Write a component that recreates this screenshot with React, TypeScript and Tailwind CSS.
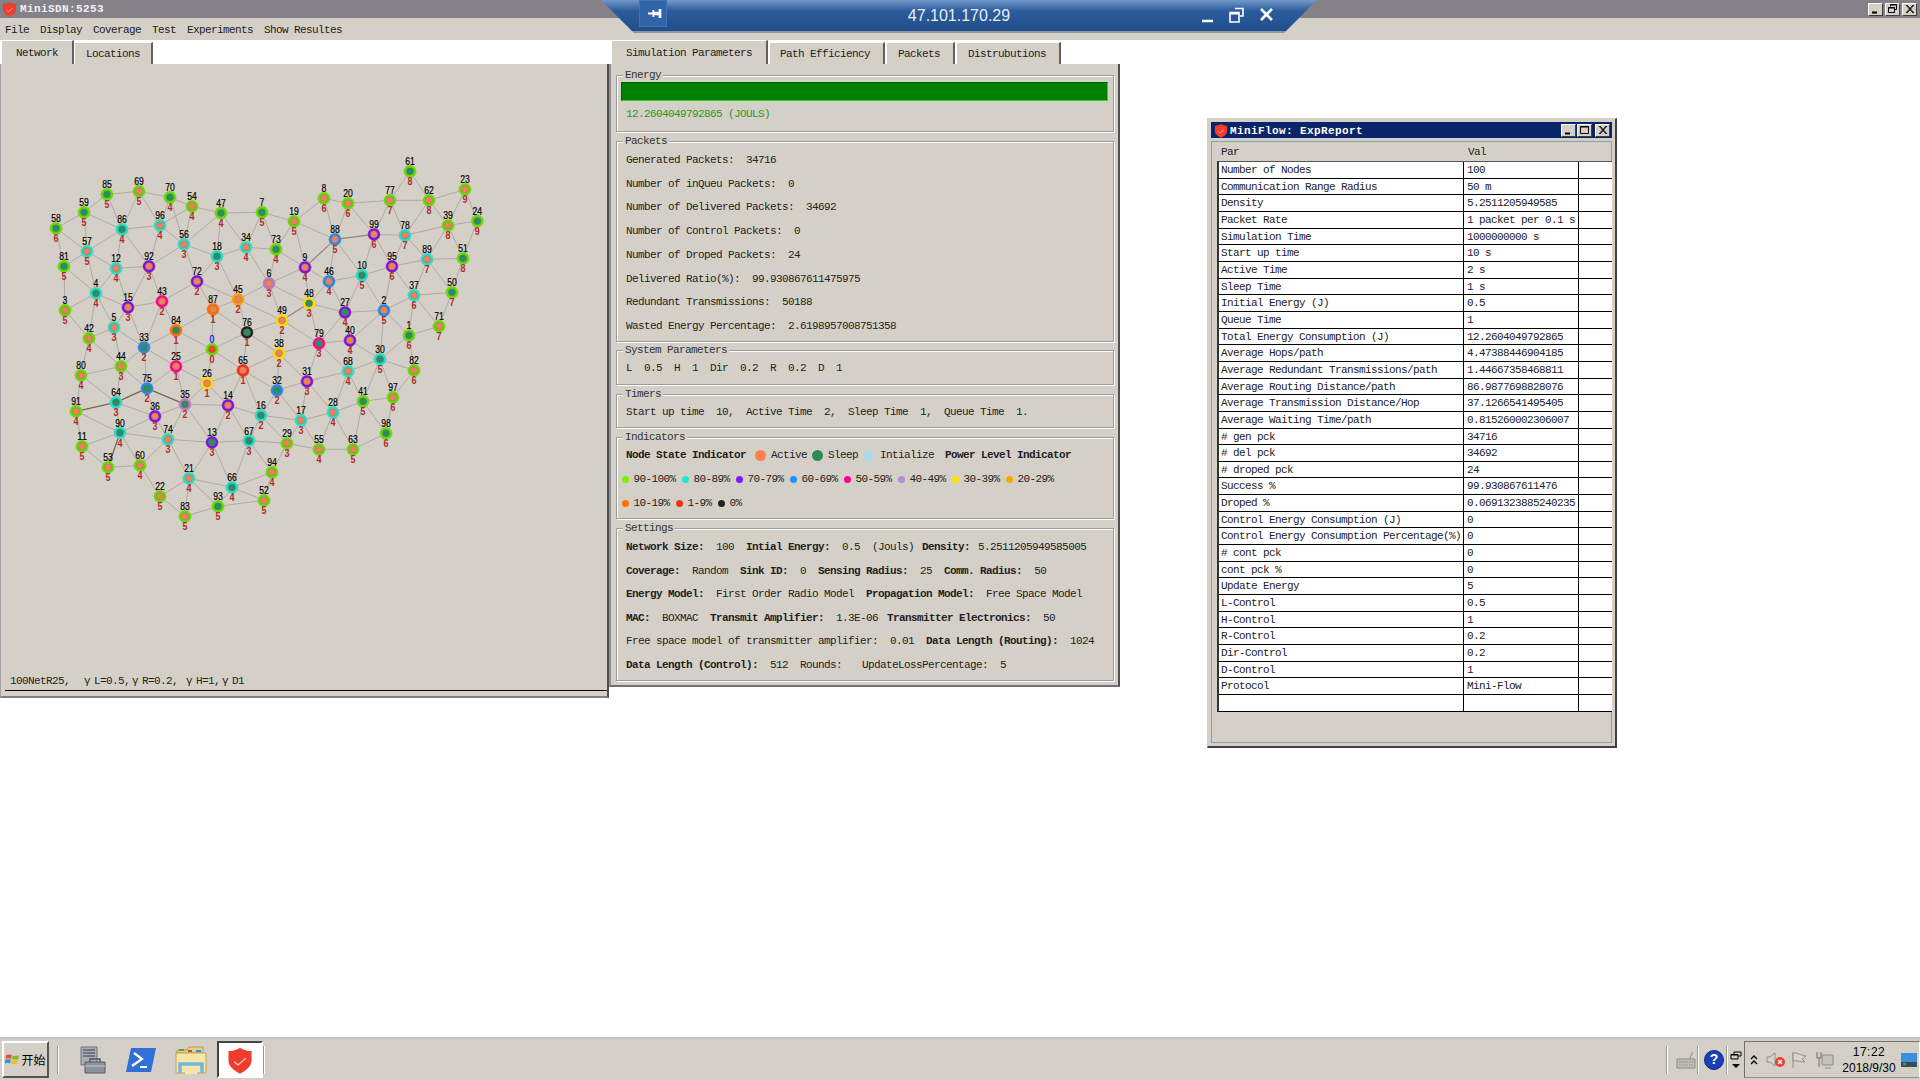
import React from 'react';

type Node = [number, number, number, number, string, 'a' | 's'];

const ringColors: Record<string, string> = {
    g: '#5ce000',
    c: '#18e4d2',
    p: '#7a12e6',
    b: '#1c8cf0',
    m: '#ff0090',
    l: '#bc78cc',
    y: '#ffe000',
    a: '#ffa000',
    o: '#ff7000',
    r: '#ff2c10',
    k: '#202020',
};

// id, x, y (in 3x crop coords), hop count, power ring, state
const nodes: Node[] = [
    [61, 1230, 94, 8, 'g', 's'], [23, 1395, 148, 9, 'g', 'a'], [24, 1432, 243, 9, 'g', 's'], [85, 321, 163, 5, 'g', 's'],
    [69, 417, 154, 5, 'g', 'a'], [70, 510, 172, 4, 'g', 's'], [54, 576, 199, 4, 'g', 'a'], [59, 252, 217, 5, 'g', 's'],
    [58, 168, 265, 6, 'g', 's'], [47, 663, 219, 4, 'g', 's'], [7, 786, 217, 5, 'g', 's'], [19, 882, 244, 5, 'g', 'a'],
    [8, 972, 175, 6, 'g', 'a'], [20, 1044, 190, 6, 'g', 'a'], [77, 1170, 181, 7, 'g', 'a'], [62, 1287, 181, 8, 'g', 'a'],
    [39, 1344, 256, 8, 'g', 'a'], [86, 366, 268, 4, 'c', 's'], [96, 480, 256, 4, 'c', 'a'], [56, 552, 313, 3, 'c', 'a'],
    [57, 261, 334, 5, 'c', 'a'], [81, 192, 379, 5, 'g', 's'], [12, 348, 385, 4, 'c', 'a'], [92, 447, 379, 3, 'p', 'a'],
    [18, 651, 349, 3, 'c', 's'], [34, 738, 322, 4, 'c', 'a'], [73, 828, 328, 4, 'g', 's'], [88, 1005, 298, 5, 'b', 'a'],
    [99, 1122, 283, 6, 'p', 'a'], [78, 1215, 286, 7, 'c', 'a'], [89, 1281, 358, 7, 'c', 'a'], [51, 1389, 355, 8, 'g', 's'],
    [9, 915, 382, 4, 'p', 'a'], [95, 1176, 379, 6, 'p', 'a'], [10, 1086, 406, 5, 'c', 's'], [46, 987, 424, 4, 'b', 'a'],
    [72, 591, 424, 2, 'p', 'a'], [6, 807, 430, 3, 'l', 'a'], [4, 288, 460, 4, 'c', 's'], [3, 195, 511, 5, 'g', 'a'],
    [15, 384, 502, 3, 'p', 'a'], [43, 486, 484, 2, 'm', 'a'], [45, 714, 478, 2, 'a', 'a'], [87, 639, 508, 1, 'o', 'a'],
    [48, 927, 490, 3, 'y', 's'], [49, 846, 541, 2, 'y', 'a'], [27, 1035, 517, 4, 'p', 's'], [2, 1152, 511, 5, 'b', 'a'],
    [37, 1242, 466, 6, 'c', 'a'], [50, 1356, 457, 7, 'g', 's'], [1, 1227, 586, 6, 'g', 's'], [71, 1317, 559, 7, 'g', 'a'],
    [5, 342, 562, 3, 'c', 'a'], [42, 267, 595, 4, 'g', 'a'], [84, 528, 571, 1, 'o', 's'], [76, 741, 577, 1, 'k', 's'],
    [33, 432, 622, 2, 'b', 's'], [0, 636, 628, 0, 'g', 'a'], [79, 957, 610, 3, 'm', 's'], [40, 1050, 601, 4, 'p', 'a'],
    [38, 837, 640, 2, 'y', 'a'], [25, 528, 679, 1, 'm', 'a'], [44, 363, 679, 3, 'g', 'a'], [80, 243, 706, 4, 'g', 'a'],
    [65, 729, 691, 1, 'r', 'a'], [68, 1044, 694, 4, 'c', 'a'], [30, 1140, 658, 5, 'c', 's'], [82, 1242, 691, 6, 'g', 'a'],
    [26, 621, 730, 1, 'y', 'a'], [75, 441, 745, 2, 'b', 's'], [31, 921, 724, 3, 'p', 'a'], [32, 831, 751, 2, 'b', 's'],
    [97, 1179, 772, 6, 'g', 'a'], [41, 1089, 784, 5, 'g', 's'], [14, 684, 796, 2, 'p', 'a'], [35, 555, 793, 2, 'l', 's'],
    [36, 465, 829, 3, 'p', 'a'], [64, 348, 787, 3, 'c', 's'], [91, 228, 814, 4, 'g', 'a'], [16, 783, 826, 2, 'c', 's'],
    [17, 903, 841, 3, 'c', 'a'], [28, 999, 817, 4, 'c', 'a'], [90, 360, 878, 4, 'c', 's'], [74, 504, 898, 3, 'c', 'a'],
    [13, 636, 907, 3, 'p', 's'], [67, 747, 902, 3, 'c', 's'], [29, 861, 910, 3, 'g', 'a'], [55, 957, 928, 4, 'g', 'a'],
    [63, 1059, 928, 5, 'g', 'a'], [98, 1158, 880, 6, 'g', 's'], [11, 246, 919, 5, 'g', 'a'], [53, 324, 982, 5, 'g', 'a'],
    [60, 420, 976, 4, 'g', 'a'], [21, 567, 1015, 4, 'c', 'a'], [66, 696, 1042, 4, 'c', 's'], [94, 816, 997, 4, 'g', 'a'],
    [22, 480, 1069, 5, 'g', 'a'], [93, 654, 1099, 5, 'g', 's'], [83, 555, 1129, 5, 'g', 'a'], [52, 792, 1081, 5, 'g', 'a'],
];

const px = (n: Node) => n[1] / 3;
const py = (n: Node) => 140 + n[2] / 3;

// links between nodes within radio range
const edges: [Node, Node][] = [];
nodes.forEach((a, i) => {
    nodes.slice(i + 1).forEach((b) => {
        if (Math.hypot(a[1] - b[1], a[2] - b[2]) <= 149) edges.push([a, b]);
    });
});

const heavyLinks = ['91-64', '64-75', '75-35', '90-53'];
const tintedLinks = ['88-99', '9-88', '48-49'];
const linkKey = (a: Node, b: Node, list: string[]) => list.includes(`${a[0]}-${b[0]}`) || list.includes(`${b[0]}-${a[0]}`);

const reportRows: [string, string][] = [
    ['Number of Nodes', '100'],
    ['Communication Range Radius', '50 m'],
    ['Density', '5.2511205949585'],
    ['Packet Rate', '1 packet per 0.1 s'],
    ['Simulation Time', '1000000000 s'],
    ['Start up time', '10 s'],
    ['Active Time', '2 s'],
    ['Sleep Time', '1 s'],
    ['Initial Energy (J)', '0.5'],
    ['Queue Time', '1'],
    ['Total Energy Consumption (J)', '12.2604049792865'],
    ['Average Hops/path', '4.47388446904185'],
    ['Average Redundant Transmissions/path', '1.44667358468811'],
    ['Average Routing Distance/path', '86.9877698828076'],
    ['Average Transmission Distance/Hop', '37.1266541495405'],
    ['Average Waiting Time/path', '0.815260002306007'],
    ['# gen pck', '34716'],
    ['# del pck', '34692'],
    ['# droped pck', '24'],
    ['Success %', '99.930867611476'],
    ['Droped %', '0.0691323885240235'],
    ['Control Energy Consumption (J)', '0'],
    ['Control Energy Consumption Percentage(%)', '0'],
    ['# cont pck', '0'],
    ['cont pck %', '0'],
    ['Update Energy', '5'],
    ['L-Control', '0.5'],
    ['H-Control', '1'],
    ['R-Control', '0.2'],
    ['Dir-Control', '0.2'],
    ['D-Control', '1'],
    ['Protocol', 'Mini-Flow'],
    ['', ''],
];

const packetLines = [
    'Generated Packets:  34716',
    'Number of inQueu Packets:  0',
    'Number of Delivered Packets:  34692',
    'Number of Control Packets:  0',
    'Number of Droped Packets:  24',
    'Delivered Ratio(%):  99.930867611475975',
    'Redundant Transmissions:  50188',
    'Wasted Energy Percentage:  2.6198957008751358',
];

const Shield = ({ className }: { className: string }) => (
    <svg viewBox="0 0 16 17" className={className}>
        <path d="M1 3 C3.5 3 6 2.5 8 1 C10 2.5 12.5 3 15 3 V9 C15 12.5 11.5 15 8 16.8 C4.5 15 1 12.5 1 9 Z" fill="#f03c2e" />
        <path d="M4.5 9.5 L6.8 11.5 L11.5 7.5" fill="none" stroke="#ffc8c0" strokeWidth="0.8" />
    </svg>
);

const CtlButton = ({ kind, className }: { kind: 'min' | 'max' | 'restore' | 'close'; className: string }) => (
    <div className={`flex items-center justify-center border border-t-white border-l-white border-r-[#404040] border-b-[#404040] bg-[#d4d0c8] ${className}`}>
        <svg viewBox="0 0 11 10" className="h-[10px] w-[11px]" fill="none" stroke="#000">
            {kind === 'min' && <path d="M2 8.5H7" strokeWidth="2" />}
            {kind === 'max' && <path d="M1.5 1.5H9.5V8.5H1.5Z M1.5 2H9.5" />}
            {kind === 'restore' && <path d="M3.5 2.5V0.5H9.5V5.5H7.5 M1.5 3.5H7.5V8.5H1.5Z M3.5 1H9.5 M1.5 4H7.5" />}
            {kind === 'close' && <path d="M2 1L9 9M3 1L10 9M9 1L2 9M10 1L3 9" strokeWidth="0.9" />}
        </svg>
    </div>
);

const Tab = ({ label, active, className }: { label: string; active?: boolean; className: string }) => (
    <div
        className={`flex items-center border-t border-l border-t-white border-l-white border-r-2 border-r-[#606060] bg-[#d4d0c8] pt-[2px] ${active ? 'h-[24px]' : 'mt-[2px] h-[22px]'} ${className}`}
    >
        {label}
    </div>
);

const Group = ({ title, className, children }: { title: string; className: string; children?: React.ReactNode }) => (
    <div className={`relative ml-[5px] w-[498px] border border-[#9c9c9c] shadow-[1px_1px_0_#fff,inset_1px_1px_0_#fff] ${className}`}>
        <span className="absolute -top-[7px] left-[6px] bg-[#d4d0c8] px-[2px] leading-[12px] text-[#333]">{title}</span>
        {children}
    </div>
);

const Dot = ({ className }: { className: string }) => <span className={`inline-block shrink-0 rounded-full ${className}`} />;

const Legend = ({ color, label, width }: { color: string; label: string; width: string }) => (
    <div className={`flex items-center ${width}`}>
        <Dot className={`h-[7px] w-[7px] ${color}`} />
        <span className="ml-[5px]">{label}</span>
    </div>
);

const NetworkGraph = () => (
    <svg width="606" height="606" viewBox="1 64 606 606" className="block font-['Liberation_Sans',sans-serif] tracking-normal">
        {edges.map(([a, b]) => {
            const heavy = linkKey(a, b, heavyLinks);
            const tinted = linkKey(a, b, tintedLinks);
            return (
                <line
                    key={`${a[0]}-${b[0]}`}
                    x1={px(a)}
                    y1={py(a)}
                    x2={px(b)}
                    y2={py(b)}
                    stroke={heavy ? '#766a52' : tinted ? '#9a7c88' : '#aaa69f'}
                    strokeWidth={heavy ? 1.3 : tinted ? 1.2 : 0.9}
                />
            );
        })}
        {nodes.map((n) => {
            const x = px(n);
            const y = py(n);
            const center = n[0] === 0 ? '#e84a1c' : n[5] === 'a' ? '#f0805a' : '#2e8b62';
            return (
                <g key={n[0]}>
                    <circle cx={x} cy={y} r={6.3} fill={ringColors[n[4]]} stroke="#f0a080" strokeOpacity="0.7" strokeWidth="0.5" />
                    <circle cx={x} cy={y} r={3.6} fill={center} stroke="#6f7a68" strokeWidth="0.4" />
                    <text
                        x={x}
                        y={y - 6}
                        textAnchor="middle"
                        textLength={n[0] > 9 ? 9.6 : 4.8}
                        lengthAdjust="spacingAndGlyphs"
                        className="text-[11px]"
                        fill={n[0] === 0 ? '#0000ff' : '#000'}
                        stroke={n[0] === 0 ? '#0000ff' : '#000'}
                        strokeWidth="0.2"
                    >
                        {n[0]}
                    </text>
                    <text x={x} y={y + 14} textAnchor="middle" textLength={5} lengthAdjust="spacingAndGlyphs" className="text-[11px]" fontWeight="600" fill="#b02c2c">
                        {n[3]}
                    </text>
                </g>
            );
        })}
    </svg>
);

const Separator = ({ className }: { className: string }) => <div className={`h-[28px] w-[2px] border-l border-r border-l-[#9a9a9a] border-r-white ${className}`} />;

const App = () => {
    return (
        <div className="relative flex h-[1080px] w-[1920px] flex-col overflow-hidden whitespace-nowrap bg-white font-['Liberation_Mono',monospace] text-[11px] tracking-[-0.6px] text-[#222]">
            {/* app title bar */}
            <div className="flex h-[18px] items-center bg-[#848288]">
                <Shield className="ml-[2px] h-[16px] w-[15px]" />
                <span className="ml-[3px] font-bold tracking-[0.4px] text-[#f0f0f0]">MiniSDN:5253</span>
                <div className="ml-auto mr-[3px] flex gap-[2px]">
                    <CtlButton kind="min" className="h-[13px] w-[15px]" />
                    <CtlButton kind="restore" className="h-[13px] w-[15px]" />
                    <CtlButton kind="close" className="h-[13px] w-[15px]" />
                </div>
            </div>

            {/* menu */}
            <div className="flex h-[22px] items-center gap-[11px] bg-[#d4d0c8] pl-[5px] pt-[2px]">
                <span>File</span>
                <span>Display</span>
                <span>Coverage</span>
                <span>Test</span>
                <span>Experiments</span>
                <span>Show Resultes</span>
            </div>

            <div className="flex flex-1 items-start">
                {/* network pane */}
                <div className="flex h-[658px] w-[609px] flex-col">
                    <div className="flex h-[24px] pl-[1px]">
                        <Tab label="Network" active className="w-[73px] pl-[14px]" />
                        <Tab label="Locations" className="w-[79px] pl-[11px]" />
                    </div>
                    <div className="flex flex-1 flex-col border-b-2 border-l border-r-2 border-b-[#808080] border-l-[#a0a0a0] border-r-[#505050] bg-[#d4d0c8]">
                        <NetworkGraph />
                        <div className="ml-[4px] flex h-[21px] items-center border-b border-b-black pl-[5px] pt-[2px]">
                            <span>100NetR25,</span>
                            <span className="ml-[14px] w-[10px]">γ</span>
                            <span>L=0.5,</span>
                            <span className="ml-[2px] w-[10px]">γ</span>
                            <span>R=0.2,</span>
                            <span className="ml-[8px] w-[10px]">γ</span>
                            <span>H=1,</span>
                            <span className="ml-[2px] w-[10px]">γ</span>
                            <span>D1</span>
                        </div>
                    </div>
                </div>

                {/* parameters pane */}
                <div className="flex h-[647px] w-[511px] flex-col">
                    <div className="flex h-[24px] pl-[2px]">
                        <Tab label="Simulation Parameters" active className="w-[157px] pl-[14px]" />
                        <Tab label="Path Efficiency" className="ml-[1px] w-[116px] pl-[10px]" />
                        <Tab label="Packets" className="ml-[1px] w-[69px] pl-[11px]" />
                        <Tab label="Distrubutions" className="ml-[1px] w-[105px] pl-[11px]" />
                    </div>
                    <div className="flex flex-1 flex-col border-b-2 border-l-2 border-r-2 border-b-[#707070] border-l-[#909090] border-r-[#505050] bg-[#d4d0c8]">
                        <Group title="Energy" className="mt-[11px] h-[57px]">
                            <div className="ml-[4px] mt-[6px] h-[19px] w-[487px] border border-[#30d030] border-l-[#006000] border-t-[#006000] bg-[#008000]" />
                            <div className="mt-[1px] pl-[9px] leading-[24px] text-[#1f9a1f]">12.2604049792865  (JOULS)</div>
                        </Group>
                        <Group title="Packets" className="mt-[9px] h-[201px] pt-[7px]">
                            {packetLines.map((line) => (
                                <div key={line} className="whitespace-pre pl-[9px] leading-[23.7px]">
                                    {line}
                                </div>
                            ))}
                        </Group>
                        <Group title="System Parameters" className="mt-[8px] h-[35px] pt-[5px]">
                            <div className="whitespace-pre pl-[9px] leading-[24px]">L  0.5  H  1  Dir  0.2  R  0.2  D  1</div>
                        </Group>
                        <Group title="Timers" className="mt-[9px] h-[34px] pt-[5px]">
                            <div className="whitespace-pre pl-[9px] leading-[24px]">Start up time  10,  Active Time  2,  Sleep Time  1,  Queue Time  1.</div>
                        </Group>
                        <Group title="Indicators" className="mt-[9px] h-[82px] pt-[5px]">
                            <div className="flex h-[24px] items-center pl-[9px]">
                                <b className="w-[120px]">Node State Indicator</b>
                                <Dot className="ml-[9px] h-[11px] w-[11px] bg-[#ff7f50]" />
                                <span className="ml-[5px] w-[36px]">Active</span>
                                <Dot className="ml-[5px] h-[11px] w-[11px] bg-[#2e8b57]" />
                                <span className="ml-[5px] w-[30px]">Sleep</span>
                                <Dot className="ml-[5px] h-[11px] w-[11px] bg-[#add8e6]" />
                                <span className="ml-[6px] w-[54px]">Intialize</span>
                                <b className="ml-[11px]">Power Level Indicator</b>
                            </div>
                            <div className="flex h-[24px] items-center pl-[4.5px]">
                                <Legend color="bg-[#7cf000]" label="90-100%" width="w-[60px]" />
                                <Legend color="bg-[#20e8d0]" label="80-89%" width="w-[54px]" />
                                <Legend color="bg-[#7a1ff0]" label="70-79%" width="w-[54px]" />
                                <Legend color="bg-[#1e90ff]" label="60-69%" width="w-[54px]" />
                                <Legend color="bg-[#ff0099]" label="50-59%" width="w-[54px]" />
                                <Legend color="bg-[#ba88d8]" label="40-49%" width="w-[54px]" />
                                <Legend color="bg-[#ffe000]" label="30-39%" width="w-[54px]" />
                                <Legend color="bg-[#ffa500]" label="20-29%" width="w-[54px]" />
                            </div>
                            <div className="flex h-[24px] items-center pl-[4.5px]">
                                <Legend color="bg-[#ff7000]" label="10-19%" width="w-[54px]" />
                                <Legend color="bg-[#ff3010]" label="1-9%" width="w-[42px]" />
                                <Legend color="bg-[#222222]" label="0%" width="w-[30px]" />
                            </div>
                        </Group>
                        <Group title="Settings" className="mt-[9px] h-[153px] pt-[7px]">
                            <div className="whitespace-pre pl-[9px] leading-[23.6px]">
                                <b>Network Size:</b>  100  <b>Intial Energy:</b>  0.5  (Jouls) <b className="ml-[2px]">Density:</b> <span className="ml-[2px]">5.2511205949585005</span>
                            </div>
                            <div className="whitespace-pre pl-[9px] leading-[23.6px]">
                                <b>Coverage:</b>  Random  <b>Sink ID:</b>  0  <b>Sensing Radius:</b>  25  <b>Comm. Radius:</b>  50
                            </div>
                            <div className="whitespace-pre pl-[9px] leading-[23.6px]">
                                <b>Energy Model:</b>  First Order Radio Model  <b>Propagation Model:</b>  Free Space Model
                            </div>
                            <div className="whitespace-pre pl-[9px] leading-[23.6px]">
                                <b>MAC:</b>  BOXMAC  <b>Transmit Amplifier:</b>  1.3E-06 <b className="ml-[3px]">Transmitter Electronics:</b>  50
                            </div>
                            <div className="whitespace-pre pl-[9px] leading-[23.6px]">
                                Free space model of transmitter amplifier:  0.01  <b>Data Length (Routing):</b>  1024
                            </div>
                            <div className="whitespace-pre pl-[9px] leading-[23.6px]">
                                <b>Data Length (Control):</b>  512  Rounds:   <span className="ml-[2px]">UpdateLossPercentage:  5</span>
                            </div>
                        </Group>
                    </div>
                </div>
            </div>

            {/* windows taskbar */}
            <div className="flex h-[43px] items-center border-t-2 border-t-[#c8c4bc] bg-[#d4d0c8]">
                <div className="ml-[2px] flex h-[37px] w-[47px] items-center justify-center gap-[1px] border-2 border-t-white border-l-white border-r-[#555] border-b-[#555]">
                    <svg viewBox="0 0 16 16" className="h-[15px] w-[15px] shrink-0">
                        <path d="M1 3.5 C3 2.5 5 2.5 7.3 3.5 L6.5 7.3 C4.5 6.5 2.5 6.5 0.5 7.4Z" fill="#e8522c" />
                        <path d="M8.2 3.7 C10.5 4.6 12.5 4.6 15 3.5 L14 7.6 C12 8.4 9.8 8.3 7.4 7.5Z" fill="#7fba2c" />
                        <path d="M0.4 8.3 C2.5 7.4 4.5 7.4 6.3 8.2 L5.4 12 C3.5 11.2 1.5 11.2 0 12.2Z" fill="#2d8fe0" />
                        <path d="M7.2 8.5 C9.6 9.3 11.7 9.4 13.9 8.6 L13 12.5 C10.8 13.2 8.6 13.2 6.3 12.4Z" fill="#f5c020" />
                    </svg>
                    <span className="font-['Noto_Sans_CJK_SC',sans-serif] text-[12px] tracking-normal text-black">开始</span>
                </div>
                <Separator className="ml-[8px]" />
                <svg viewBox="0 0 30 30" className="ml-[18px] h-[30px] w-[30px]">
                    <path d="M4 2H20V20H4Z" fill="#a8aeb8" stroke="#6c7078" />
                    <path d="M6 5H18M6 8H18M6 11H18" stroke="#5c626c" strokeWidth="1.4" />
                    <path d="M8 17H28V28H8Z" fill="#8a929c" stroke="#555b64" />
                    <path d="M13 17V14H23V17" fill="none" stroke="#4e545c" strokeWidth="1.5" />
                    <path d="M8 21H28" stroke="#c8ccd2" />
                </svg>
                <svg viewBox="0 0 32 26" className="ml-[18px] h-[26px] w-[32px]">
                    <path d="M6 1H31L26 25H1Z" fill="#2f6fd6" />
                    <path d="M9 6L17 12L7 19" fill="none" stroke="#fff" strokeWidth="2.2" />
                    <path d="M15 20H22" stroke="#fff" strokeWidth="2" />
                </svg>
                <svg viewBox="0 0 32 30" className="ml-[18px] h-[30px] w-[32px]">
                    <path d="M2 5H12L14 2H28V8H2Z" fill="#e6cf86" stroke="#b89c50" />
                    <path d="M4 4H9V6H4Z" fill="#38b040" />
                    <path d="M13 5H17V7H13Z" fill="#d84030" />
                    <path d="M21 5H26V7H21Z" fill="#3090d8" />
                    <path d="M1 8H31V28H1Z" fill="#f6e7a8" stroke="#bda458" />
                    <path d="M5 28V19H27V28" fill="none" stroke="#70b8e0" strokeWidth="3.5" />
                    <path d="M10 24H22V29H10Z" fill="#f6e7a8" />
                </svg>
                <div className="ml-[10px] flex h-[37px] w-[46px] items-center justify-center border-2 border-t-[#444] border-l-[#444] border-r-white border-b-white bg-white">
                    <Shield className="h-[28px] w-[28px]" />
                </div>
                <Separator className="ml-0" />
                <div className="flex-1" />
                <Separator className="mr-[8px]" />
                <svg viewBox="0 0 20 18" className="h-[18px] w-[20px]" fill="none" stroke="#8c8c8c">
                    <path d="M1 8H19V17H1Z" fill="#c0bdb6" />
                    <path d="M3 11H17M3 14H17" strokeDasharray="1.5 1" />
                    <path d="M14 8C14 4 17 4 16 1" />
                </svg>
                <Separator className="ml-[1px]" />
                <div className="ml-[5px] flex h-[20px] w-[20px] items-center justify-center rounded-full border border-[#0a2a80] bg-[#1a3fb0] font-['Liberation_Sans',sans-serif] text-[14px] font-bold tracking-normal text-white">
                    ?
                </div>
                <Separator className="ml-[2px]" />
                <svg viewBox="0 0 12 18" className="ml-[2px] h-[18px] w-[12px]" fill="none" stroke="#000">
                    <path d="M4 3V1H11V5H8 M1 3.5H8V8H1Z M1 4H8" />
                    <path d="M2 13H10L6 17Z" fill="#000" stroke="none" />
                </svg>
                <div className="ml-[2px] flex h-[37px] w-[176px] items-center border border-t-[#707070] border-l-[#707070] border-r-white border-b-[#909090]">
                    <svg viewBox="0 0 8 10" className="ml-[5px] h-[10px] w-[8px]" fill="none" stroke="#000" strokeWidth="1.4">
                        <path d="M1 4L4 1L7 4M1 9L4 6L7 9" />
                    </svg>
                    <svg viewBox="0 0 20 18" className="ml-[8px] h-[18px] w-[20px]">
                        <path d="M1 6H4L9 2V15L4 11H1Z" fill="#d8d4cc" stroke="#8c8c8c" />
                        <circle cx="14" cy="11" r="5" fill="#e84030" />
                        <path d="M12 9L16 13M16 9L12 13" stroke="#fff" strokeWidth="1.3" />
                    </svg>
                    <svg viewBox="0 0 16 18" className="ml-[5px] h-[18px] w-[16px]" fill="#d8d4cc" stroke="#8c8c8c">
                        <path d="M2 1V17" />
                        <path d="M2 2C6 1 8 4 15 5L11 8L14 11C8 11 6 9 2 10Z" />
                    </svg>
                    <svg viewBox="0 0 18 18" className="ml-[9px] h-[18px] w-[18px]" fill="#c4c0b8" stroke="#8c8c8c">
                        <path d="M6 4H17V14H6Z" />
                        <path d="M9 17H15" />
                        <path d="M1 1V7H5V1M3 7V16" fill="none" stroke="#707070" />
                    </svg>
                    <div className="ml-[3px] flex w-[64px] flex-col items-center font-['Liberation_Sans',sans-serif] text-[12px] leading-[16px] tracking-normal text-black">
                        <span className="tracking-[0.5px]">17:22</span>
                        <span>2018/9/30</span>
                    </div>
                    <svg viewBox="0 0 16 14" className="h-[14px] w-[16px]">
                        <path d="M0 0H16V14H0Z" fill="#3a8fd8" />
                        <path d="M0 9H16V14H0Z" fill="#3c4a58" />
                        <path d="M2 11H5" stroke="#6fd060" />
                    </svg>
                </div>
            </div>

            {/* remote desktop connection bar */}
            <div className="absolute left-[601px] top-0 flex h-[33px] w-[716px] items-start bg-[linear-gradient(#7198c9_0,#2c5c9c_11px,#1f4e8c_31px,#8a96a4_31px)] font-['Liberation_Sans',sans-serif] tracking-normal [clip-path:polygon(0_0,100%_0,95.4%_100%,4.6%_100%)]">
                <div className="ml-[38px] flex h-[27px] w-[28px] items-center justify-center border border-[#3f74b4] bg-[#2f64a8] pl-[5px]">
                    <svg viewBox="0 0 18 14" className="h-[13px] w-[16px]" fill="#fff">
                        <path d="M0 6H5V8H0Z M5 3H7V11H5Z M7 5H13V9H7Z M12 2H15V12H12Z" />
                    </svg>
                </div>
                <span className="absolute left-0 right-0 top-[7px] text-center text-[16px] leading-[18px] text-[#e8eef6]">47.101.170.29</span>
                <svg viewBox="0 0 80 16" className="absolute left-[601px] top-[7px] h-[16px] w-[80px]" fill="none" stroke="#fff">
                    <path d="M0 14H11" strokeWidth="2.5" />
                    <path d="M33 1.5H41V9H38 M28 5.5H37V15H28Z" strokeWidth="1.6" />
                    <path d="M28 6.5H37" strokeWidth="2" />
                    <path d="M59 2L70 13M70 2L59 13" strokeWidth="2.6" />
                </svg>
            </div>

            {/* report window */}
            <div className="absolute left-[1207px] top-[118px] flex h-[630px] w-[410px] flex-col border border-[#d4d0c8] border-b-2 border-r-2 border-b-[#404040] border-r-[#404040] bg-[#d4d0c8] p-[3px]">
                <div className="flex h-[16px] shrink-0 items-center bg-[#0a246a]">
                    <Shield className="ml-[3px] h-[15px] w-[14px]" />
                    <span className="ml-[2px] pt-[2px] font-bold tracking-[0.4px] text-white">MiniFlow: ExpReport</span>
                    <div className="ml-auto mr-[2px] flex gap-[1px]">
                        <CtlButton kind="min" className="h-[13px] w-[15px]" />
                        <CtlButton kind="max" className="mr-[2px] h-[13px] w-[15px]" />
                        <CtlButton kind="close" className="h-[13px] w-[15px]" />
                    </div>
                </div>
                <div className="mt-[3px] flex flex-1 flex-col border border-[#86a0b4]">
                    <div className="flex h-[19px] items-center pl-[9px] pt-[2px]">
                        <span className="w-[247px]">Par</span>
                        <span>Val</span>
                    </div>
                    <div className="ml-[5px] grid w-[395px] grid-cols-[245px_115px_33px] auto-rows-[16.67px] border-l-2 border-t border-l-[#333] border-t-[#555] bg-white">
                        {reportRows.map(([par, val], i) => (
                            <React.Fragment key={i}>
                                <div className="whitespace-pre border-b border-r border-black pl-[2px] leading-[17.6px]">{par}</div>
                                <div className="whitespace-pre border-b border-r border-black pl-[3px] leading-[17.6px]">{val}</div>
                                <div className="border-b border-black" />
                            </React.Fragment>
                        ))}
                    </div>
                </div>
            </div>
        </div>
    );
};

export default App;
